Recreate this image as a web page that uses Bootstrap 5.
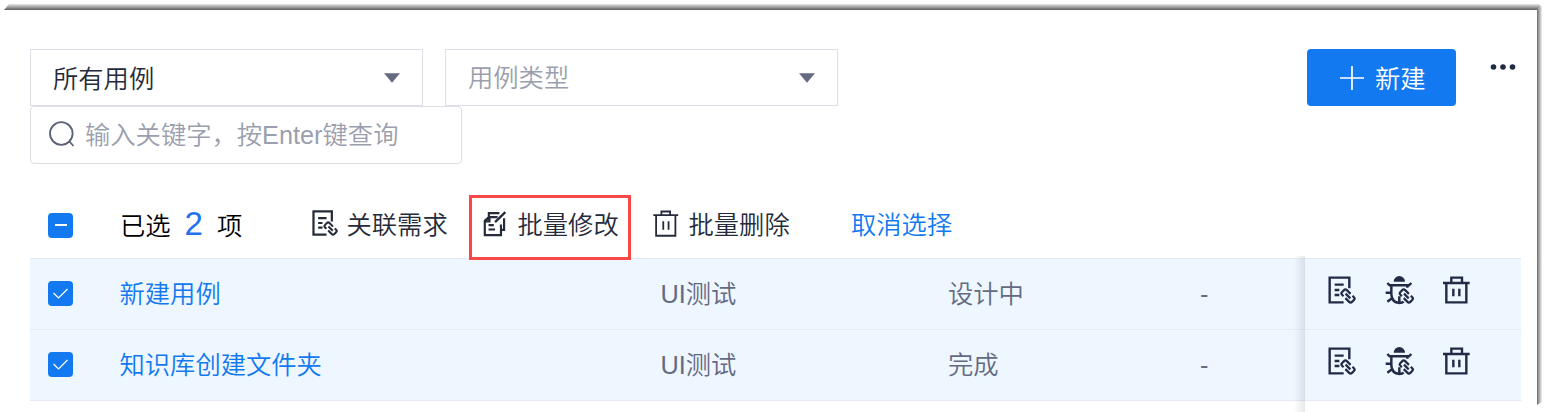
<!DOCTYPE html>
<html lang="zh-CN">
<head>
<meta charset="utf-8">
<meta name="viewport" content="width=device-width, initial-scale=1">
<title>用例列表</title>
<link href="https://cdn.jsdelivr.net/npm/bootstrap@5.3.0/dist/css/bootstrap.min.css" rel="stylesheet">
<style>
  :root { --ink: #252b3a; --icon: #222b45; --brand: #1279f0; --line: #dcdfe6; --muted: #9b9fad; --cell: #646a82; }
  html, body { height: 412px; overflow: hidden; }
  body { background: #fff; color: var(--ink); font-family: "Liberation Sans", "Noto Sans CJK SC DemiLight", "Noto Sans CJK SC", sans-serif; font-weight: 350; font-size: 25.3px; line-height: 36px; }
  svg { display: block; flex: none; overflow: visible; }
  .window-top { position: absolute; left: 4px; top: 4px; width: 1537px; height: 6px; background: linear-gradient(#e8e8e8, #b0b0b0 40%, #5c5c5c); clip-path: polygon(5px 0, 1535px 0, 1537px 2px, 1533px 6px, 0 6px); }
  .window-right { position: absolute; left: 1537px; top: 6px; width: 5px; height: 399px; background: linear-gradient(90deg, #6a6a6a, #b0b0b0 50%, #f0f0f0); clip-path: polygon(0 4px, 4px 0, 5px 1px, 5px 396px, 0 399px); }
  .page-body { padding: 49px 30px 0 30px; }
  .picker { width: 393px; height: 57px; border: 1px solid var(--line); padding: 0 22px; }
  .picker span { margin-top: 3px; }
  .picker-empty { color: var(--muted); margin-left: 22px; }
  .picker-empty span { margin-top: 0; }
  .search-box { width: 432px; height: 58px; border: 1px solid var(--line); border-radius: 4px; padding-left: 18px; color: var(--muted); }
  .search-box span { margin-left: 10px; }
  .btn-create { width: 149px; height: 57px; border-radius: 4px; background: var(--brand); color: #fff; padding: 0 0 0 33px; font-size: inherit; line-height: 36px; font-weight: inherit; }
  .btn-create:hover { background: #0d6be0; color: #fff; }
  .btn-create span { margin: 3px 0 0 11px; }
  .dots { width: 27px; margin: 15px 0 0 34px; }
  .bulk { height: 94px; padding: 29px 0 0 18px; }
  .tick { width: 25px; height: 25px; border-radius: 4px; background: var(--brand); flex: none; margin-top: -1px; }
  .picked { width: 191px; margin-left: 47px; color: #000; }
  .picked b { font-size: 33px; font-weight: 400; color: #2370ee; margin: -3px 14px 0 14px; line-height: 30px; }
  .act { position: relative; width: 171px; }
  .act svg { margin-top: -5px; }
  .act span { margin-left: 7.5px; margin-top: -1px; }
  .framed::after { content: ""; position: absolute; left: -13px; top: -13px; width: 162px; height: 65px; border: 3px solid #f94848; z-index: 2; }
  .brand-text { color: var(--brand); text-decoration: none; }
  .cancel { margin-left: 27px; margin-top: -2px; }
  .case-row { height: 71px; border-top: 1px solid #e5e9f2; background: #eef6ff; padding-left: 18px; color: var(--cell); }
  .case-list { position: relative; border-bottom: 1px solid #e5e9f2; width: 1491px; }
  .case-list::after { content: ""; position: absolute; left: 1264px; top: -2px; width: 11px; height: 156px; background: linear-gradient(90deg, rgba(90,100,110,0), rgba(90,100,110,.15)); }
  .c-name { width: 541px; margin: -1px 0 0 46.5px; }
  .c-type { width: 287.5px; }
  .c-type, .c-state, .c-owner { margin-top: -1px; }
  .c-state { width: 252px; }
  .c-owner { width: 127px; }
  .c-ops { gap: 27.5px; margin-top: -8px; color: var(--icon); }
</style>
</head>
<body>
<svg width="0" height="0" class="position-absolute" aria-hidden="true">
  <defs>
    <g id="chain" fill="none" stroke="currentColor" stroke-width="6.6">
      <path d="M1-10H-15a6 6 0 0 0-6 6V4a6 6 0 0 0 6 6H-9M-1 10H15a6 6 0 0 0 6-6V-4a6 6 0 0 0-6-6H9M-10 0H10"/>
    </g>
    <symbol id="doc-link" viewBox="0 0 90 90">
      <path d="M67 40V8H8V82H50M23 29H50M23 45H37M23 60H37" fill="none" stroke="currentColor" stroke-width="7.2"/>
      <use href="#chain" transform="translate(63 63) rotate(45)"/>
    </symbol>
    <symbol id="bug-link" viewBox="0 0 90 90">
      <path d="M26 20a17 17 0 0 1 34 0z" fill="currentColor"/>
      <path d="M7 24L14 31H72L79 24M19 31V58Q20 82 44 84M67 31V38M2 53H19M7 80L22 69M43 64V84M43 84Q52 84 56 80" fill="none" stroke="currentColor" stroke-width="7.4"/>
      <use href="#chain" transform="translate(64 63) rotate(45)"/>
    </symbol>
    <symbol id="bin" viewBox="0 0 90 90">
      <path d="M3 24H83M13 24V82H73V24M28 24V8H60V24M34 41V64M52 41V64" fill="none" stroke="currentColor" stroke-width="7.2"/>
    </symbol>
    <symbol id="bin-thin" viewBox="0 0 90 90">
      <path d="M1 20H81M10 20V86H72V20M27 20V8H55V20M33 39V67M50 39V67" fill="none" stroke="currentColor" stroke-width="5.8"/>
    </symbol>
    <symbol id="edit-pages" viewBox="0 0 90 90">
      <path d="M50 26H22L9 38V84H61V50M9 40H24V26M22 24V13H56M71 30V67H63M21 52H38M21 66H42" fill="none" stroke="currentColor" stroke-width="7"/>
      <path d="M75 10L42 42" fill="none" stroke="currentColor" stroke-width="7.4"/>
    </symbol>
  </defs>
</svg>
<div class="window-top"></div>
<div class="window-right"></div>

<main class="page-body">
  <div class="d-flex align-items-start">
    <div class="picker d-flex align-items-center justify-content-between">
      <span>所有用例</span>
      <svg width="16" height="10" viewBox="0 0 17 10"><path d="M0 0H17L8.5 10z" fill="#646a82"/></svg>
    </div>
    <div class="picker picker-empty d-flex align-items-center justify-content-between">
      <span>用例类型</span>
      <svg width="16" height="10" viewBox="0 0 17 10"><path d="M0 0H17L8.5 10z" fill="#646a82"/></svg>
    </div>
    <button class="btn btn-create border-0 d-flex align-items-center ms-auto">
      <svg width="24" height="24" viewBox="0 0 24 24"><path d="M12 0V24M0 12H24" stroke="#fff" stroke-width="1.7"/></svg>
      <span>新建</span>
    </button>
    <svg class="dots" width="27" height="6" viewBox="0 0 27 6" fill="#222b45"><circle cx="3.5" cy="3" r="2.8"/><circle cx="13" cy="3" r="2.8"/><circle cx="22.5" cy="3" r="2.8"/></svg>
  </div>
  <div class="search-box d-flex align-items-center">
    <svg width="26" height="26" viewBox="0 0 26 26" fill="none" stroke="#5b6178" stroke-width="1.8"><circle cx="12.3" cy="11.5" r="11.3"/><path d="M20 19L24.5 24"/></svg>
    <span>输入关键字，按Enter键查询</span>
  </div>

  <div class="bulk d-flex align-items-center">
    <span class="tick d-flex align-items-center justify-content-center"><svg width="12" height="2" viewBox="0 0 12 2"><path d="M0 1H12" stroke="#fff" stroke-width="2"/></svg></span>
    <span class="picked d-flex align-items-center">已选<b>2</b>项</span>
    <div class="act d-flex align-items-center"><svg width="28" height="28"><use href="#doc-link"/></svg><span>关联需求</span></div>
    <div class="act framed d-flex align-items-center"><svg width="28" height="28"><use href="#edit-pages"/></svg><span>批量修改</span></div>
    <div class="act d-flex align-items-center"><svg width="28" height="28"><use href="#bin-thin"/></svg><span>批量删除</span></div>
    <a class="brand-text cancel" href="#">取消选择</a>
  </div>

  <div class="case-list">
    <div class="case-row d-flex align-items-center">
      <span class="tick d-flex align-items-center justify-content-center"><svg width="15" height="11" viewBox="0 0 15 11"><path d="M.5 5L5.5 10L14.5 1" fill="none" stroke="#fff" stroke-width="1.2"/></svg></span>
      <a class="c-name brand-text" href="#">新建用例</a>
      <span class="c-type">UI测试</span>
      <span class="c-state">设计中</span>
      <span class="c-owner">-</span>
      <span class="c-ops d-flex"><svg width="30" height="30"><use href="#doc-link"/></svg><svg width="30" height="30"><use href="#bug-link"/></svg><svg width="30" height="30"><use href="#bin"/></svg></span>
    </div>
    <div class="case-row d-flex align-items-center">
      <span class="tick d-flex align-items-center justify-content-center"><svg width="15" height="11" viewBox="0 0 15 11"><path d="M.5 5L5.5 10L14.5 1" fill="none" stroke="#fff" stroke-width="1.2"/></svg></span>
      <a class="c-name brand-text" href="#">知识库创建文件夹</a>
      <span class="c-type">UI测试</span>
      <span class="c-state">完成</span>
      <span class="c-owner">-</span>
      <span class="c-ops d-flex"><svg width="30" height="30"><use href="#doc-link"/></svg><svg width="30" height="30"><use href="#bug-link"/></svg><svg width="30" height="30"><use href="#bin"/></svg></span>
    </div>
  </div>
</main>
<script src="https://cdn.jsdelivr.net/npm/bootstrap@5.3.0/dist/js/bootstrap.bundle.min.js"></script>
</body>
</html>
